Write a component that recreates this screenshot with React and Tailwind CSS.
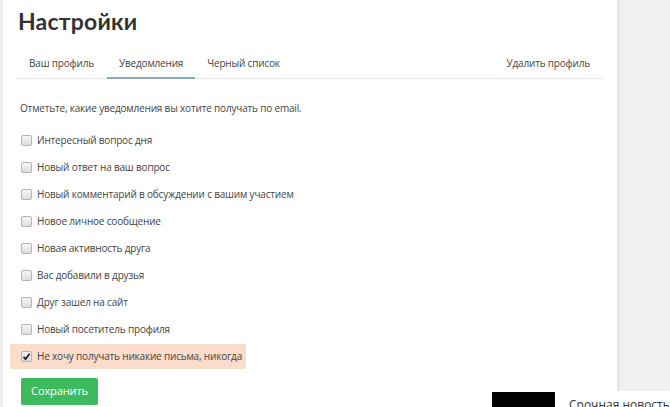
import React from "react";

const items = [
  "Интересный вопрос дня",
  "Новый ответ на ваш вопрос",
  "Новый комментарий в обсуждении с вашим участием",
  "Новое личное сообщение",
  "Новая активность друга",
  "Вас добавили в друзья",
  "Друг зашел на сайт",
  "Новый посетитель профиля",
];

function Box({ checked }) {
  return (
    <span className="w-[11px] h-[11px] rounded-[2px] border border-[#b4b4b4] bg-gradient-to-b from-[#f6f6f6] to-[#dddddd] flex items-center justify-center shrink-0">
      {checked && (
        <svg width="9" height="9" viewBox="0 0 9 9">
          <path d="M1.5 4.8 L3.6 7 L7.6 1.8" fill="none" stroke="#222" strokeWidth="1.8" />
        </svg>
      )}
    </span>
  );
}

const body = "text-[10px] tracking-[-0.18px] text-[#444]";

export default function App() {
  return (
    <div className="w-[670px] h-[407px] overflow-hidden relative flex bg-white" style={{ fontFamily: '"Open Sans", sans-serif' }}>
      <div className="w-[3px] bg-[#eeeeee] shrink-0" />
      <div className="w-[614px] shrink-0 bg-white pl-[14px] pr-[15px]">
        <h1 className="text-[23px] font-bold text-[#333] leading-none mt-[10px] ml-[1px] tracking-[0.2px]" style={{ fontFamily: 'Lato, sans-serif' }}>Настройки</h1>
        <div className={`mt-[21px] flex items-end border-b border-[#e6e6e6] h-[25px] whitespace-nowrap ${body}`}>
          <div className="px-[12px] pb-[7px]">Ваш профиль</div>
          <div className="px-[12px] pb-[6px] border-b-2 border-[#8aaabb] -mb-[1px] ml-[1px]">Уведомления</div>
          <div className="px-[12px] pb-[7px]">Черный список</div>
          <div className="ml-auto pr-[12px] pb-[7px]">Удалить профиль</div>
        </div>
        <p className={`mt-[22px] ml-[3px] leading-[15px] ${body}`}>Отметьте, какие уведомления вы хотите получать по email.</p>
        <div className="mt-[11px] flex flex-col">
          {items.map((t) => (
            <div key={t} className={`h-[27px] flex items-center gap-[5px] pl-[4px] whitespace-nowrap ${body}`}>
              <Box />
              <span>{t}</span>
            </div>
          ))}
          <div className={`mt-[1px] h-[25px] w-[236px] -ml-[7px] pl-[11px] bg-[#fcdccb] flex items-center gap-[5px] whitespace-nowrap ${body}`}>
            <Box checked />
            <span>Не хочу получать никакие письма, никогда</span>
          </div>
        </div>
        <button className="mt-[9px] ml-[4px] w-[77px] h-[27px] rounded-[2px] bg-[#3dba5e] text-white text-[11px] tracking-[-0.1px]">Сохранить</button>
      </div>
      <div className="flex-1 bg-[#f1f1f1] border-l-[3px] border-[#e8e8e8]" />
      <div className="absolute left-[482px] top-[391px] w-[188px] h-[20px] bg-white flex items-start">
        <div className="ml-[10px] mt-[1px] w-[63px] h-[20px] bg-black shrink-0" />
        <span className="ml-[14px] mt-[8px] text-[12px] text-[#333] leading-none whitespace-nowrap">Срочная новость</span>
      </div>
    </div>
  );
}
